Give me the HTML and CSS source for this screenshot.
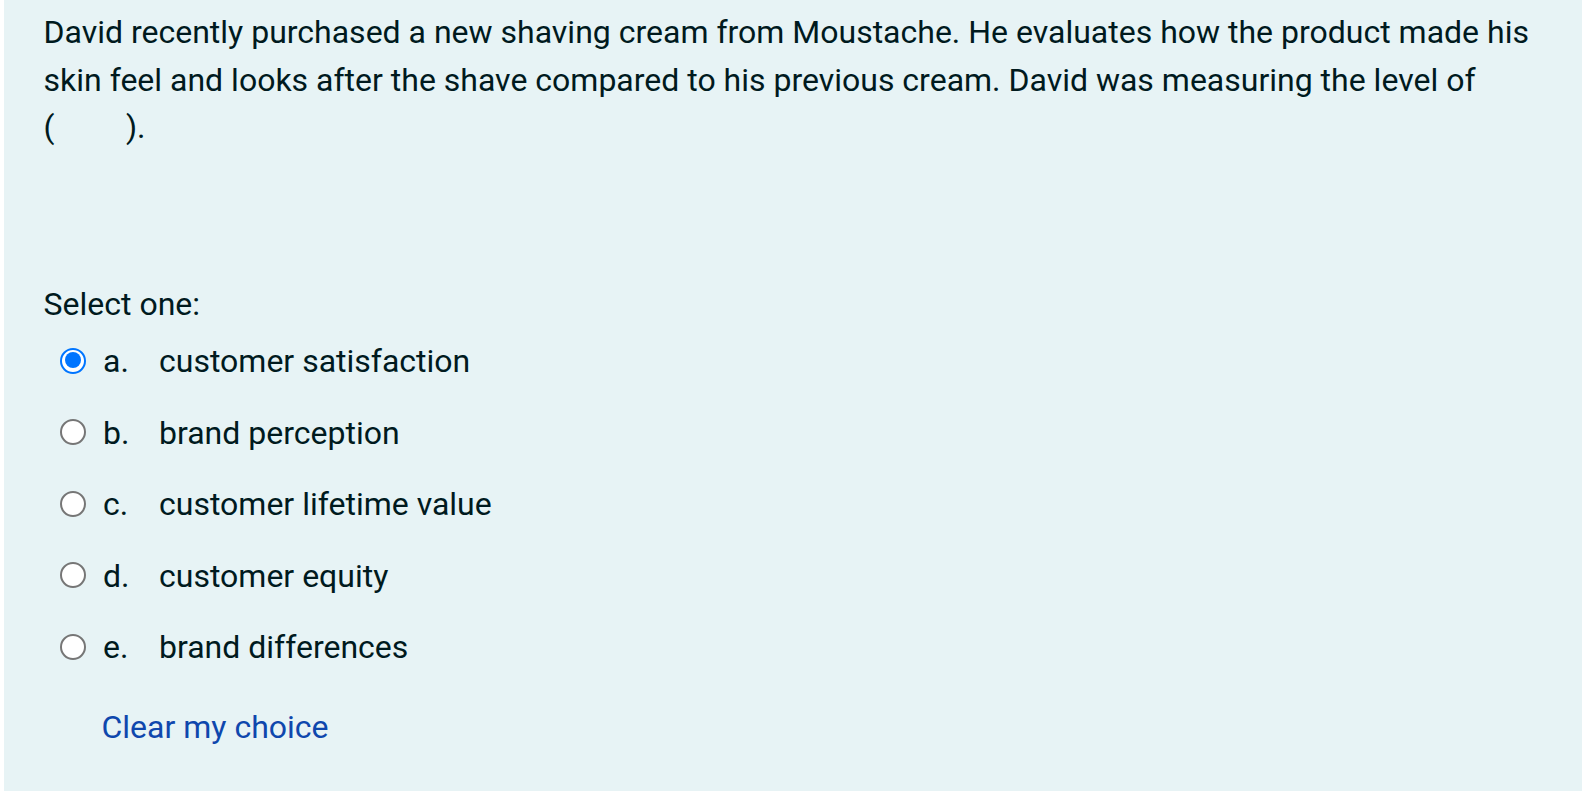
FILE: index.html
```html
<!DOCTYPE html>
<html lang="en">
<head>
<meta charset="utf-8">
<title>Question</title>
<link rel="stylesheet" href="styles.css">
</head>
<body>
<div class="formulation">
  <div class="qtext">David recently purchased a new shaving cream from Moustache. He evaluates how the product made his skin feel and looks after the shave compared to his previous cream. David was measuring the level of (&nbsp;&nbsp;&nbsp;&nbsp;&nbsp;&nbsp;&nbsp;&nbsp;&nbsp;).</div>
  <div class="prompt">Select one:</div>
  <div class="answer">
    <div class="option"><span class="radio checked"></span><span class="num">a.</span><span class="label">customer satisfaction</span></div>
    <div class="option"><span class="radio"></span><span class="num">b.</span><span class="label">brand perception</span></div>
    <div class="option"><span class="radio"></span><span class="num">c.</span><span class="label">customer lifetime value</span></div>
    <div class="option"><span class="radio"></span><span class="num">d.</span><span class="label">customer equity</span></div>
    <div class="option"><span class="radio"></span><span class="num">e.</span><span class="label">brand differences</span></div>
  </div>
  <div class="clear"><a href="#" class="clear-link">Clear my choice</a></div>
</div>
</body>
</html>
```
FILE: styles.css
```css
html, body {
  margin: 0;
  padding: 0;
  background: #ffffff;
}
body {
  font-family: Roboto, "Liberation Sans", sans-serif;
  font-size: 32px;
  line-height: 47.5px;
  color: #001a1e;
}
.formulation {
  margin-left: 4px;
  height: 791px;
  box-sizing: border-box;
  background: #e7f3f5;
  padding: 9px 40px 0 39.5px;
}
.qtext {
  margin: 0;
}
.prompt {
  margin-top: 129px;
}
.answer {
  margin-top: -2px;
}
.option {
  display: flex;
  align-items: flex-start;
  padding: 12px 0 12px 16.5px;
}
.radio {
  flex: none;
  width: 26px;
  height: 26px;
  box-sizing: border-box;
  border-radius: 50%;
  border: 2px solid #767676;
  background: #ffffff;
  margin-top: 9.5px;
  margin-right: 17px;
  position: relative;
}
.radio.checked {
  border: 2.5px solid #0075ff;
}
.radio.checked::after {
  content: "";
  position: absolute;
  left: 2.5px;
  top: 2.5px;
  width: 16px;
  height: 16px;
  border-radius: 50%;
  background: #0075ff;
}
.num {
  flex: none;
  width: 56px;
}
.clear {
  margin-top: 20.5px;
  padding-left: 58px;
}
.clear-link {
  color: #0f47ad;
  text-decoration: none;
}
```
